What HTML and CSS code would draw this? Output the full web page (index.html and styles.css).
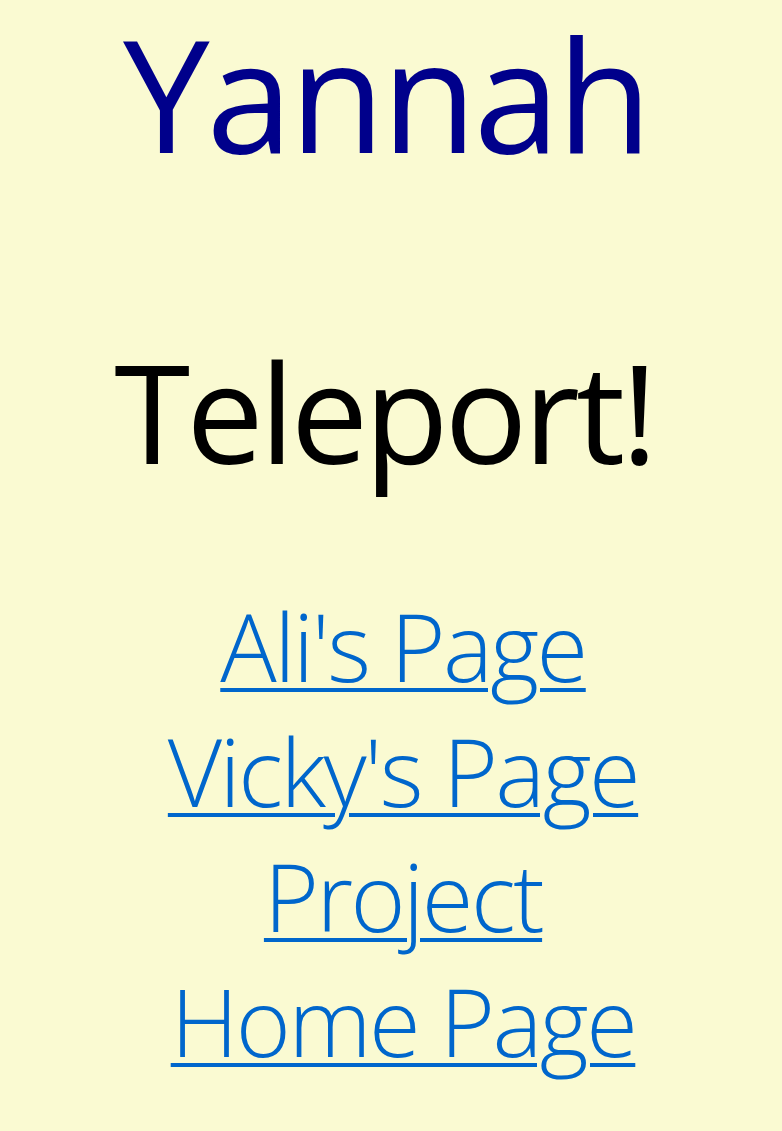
FILE: index.html
```html
<!DOCTYPE html>
<html>
<head>
<meta charset="utf-8">
<title>Yannah</title>
<link rel="stylesheet" href="styles.css">
</head>
<body>
<h1 class="title">Yannah</h1>
<h2 class="subtitle">Teleport!</h2>
<ul class="links">
<li><a href="#">Ali's Page</a></li>
<li><a href="#">Vicky's Page</a></li>
<li><a href="#">Project</a></li>
<li><a href="#">Home Page</a></li>
</ul>
</body>
</html>
```
FILE: styles.css
```css
html, body {
  background: #fafad2;
}
body {
  margin: 0;
  padding: 0 8px;
  font-family: "Open Sans", "Noto Sans", sans-serif;
  text-align: center;
}
.title {
  margin: 0;
  padding-right: 10px;
  color: #00008b;
  font-size: 155px;
  font-weight: 400;
  line-height: 186px;
  letter-spacing: -3px;
}
.subtitle {
  margin: 144px 0 0;
  padding-right: 14px;
  color: #000;
  font-size: 138px;
  font-weight: 400;
  line-height: 160px;
  letter-spacing: -4px;
}
.links {
  list-style: none;
  margin: 94px 0 0;
  padding: 0 0 0 24px;
}
.links li {
  font-size: 94px;
  line-height: 125px;
  font-weight: 300;
  letter-spacing: -2.5px;
}
.links a {
  color: #0066cc;
  text-decoration: underline;
  text-decoration-thickness: 4px;
  text-underline-offset: 6px;
}
```
